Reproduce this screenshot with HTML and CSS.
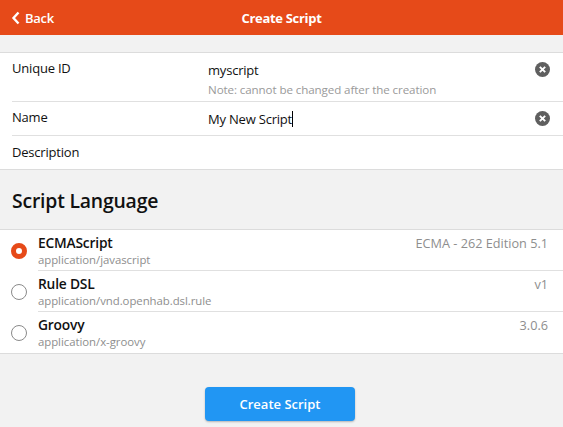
FILE: index.html
```html
<!DOCTYPE html>
<html>
<head>
<meta charset="utf-8">
<link rel="stylesheet" href="styles.css">
</head>
<body>
<div class="navbar">
  <a class="back">
    <svg width="10" height="14" viewBox="0 0 10 14"><path d="M7.5 1.5 L2.5 7 L7.5 12.5" fill="none" stroke="#fff" stroke-width="2.4"/></svg>
    <span>Back</span>
  </a>
  <div class="title">Create Script</div>
</div>
<div class="page">
  <div class="list form">
    <div class="row row-id">
      <div class="label">Unique ID</div>
      <div class="input">
        <div class="value">myscript</div>
        <div class="note">Note: cannot be changed after the creation</div>
      </div>
      <span class="clear"><svg width="15" height="15" viewBox="0 0 14 14"><circle cx="7" cy="7" r="7" fill="#5f5f5f"/><path d="M4.5 4.5 L9.5 9.5 M9.5 4.5 L4.5 9.5" stroke="#fff" stroke-width="1.8"/></svg></span>
    </div>
    <div class="row row-name">
      <div class="label">Name</div>
      <div class="input"><div class="value">My New Script<span class="caret"></span></div></div>
      <span class="clear"><svg width="15" height="15" viewBox="0 0 14 14"><circle cx="7" cy="7" r="7" fill="#5f5f5f"/><path d="M4.5 4.5 L9.5 9.5 M9.5 4.5 L4.5 9.5" stroke="#fff" stroke-width="1.8"/></svg></span>
    </div>
    <div class="row row-desc last">
      <div class="label">Description</div>
    </div>
  </div>
  <h2 class="section">Script Language</h2>
  <div class="list langs">
    <div class="lang">
      <span class="radio checked"></span>
      <div class="lang-body">
        <div class="lang-top"><span class="lang-name">ECMAScript</span><span class="lang-ver">ECMA - 262 Edition 5.1</span></div>
        <div class="lang-mime">application/javascript</div>
      </div>
    </div>
    <div class="lang">
      <span class="radio"></span>
      <div class="lang-body">
        <div class="lang-top"><span class="lang-name">Rule DSL</span><span class="lang-ver">v1</span></div>
        <div class="lang-mime">application/vnd.openhab.dsl.rule</div>
      </div>
    </div>
    <div class="lang last">
      <span class="radio"></span>
      <div class="lang-body">
        <div class="lang-top"><span class="lang-name">Groovy</span><span class="lang-ver">3.0.6</span></div>
        <div class="lang-mime">application/x-groovy</div>
      </div>
    </div>
  </div>
  <div class="actions">
    <button class="btn">Create Script</button>
  </div>
</div>
</body>
</html>
```
FILE: styles.css
```css
* { box-sizing: border-box; }
html, body { margin: 0; padding: 0; }
body {
  font-family: "Open Sans", "Noto Sans", sans-serif;
  background: #f2f2f2;
  color: #111;
  width: 563px;
  height: 427px;
  overflow: hidden;
}
.navbar {
  height: 35px;
  background: #e64a19;
  color: #fff;
  display: flex;
  align-items: center;
  position: relative;
}
.back {
  display: flex;
  align-items: center;
  gap: 4px;
  padding-left: 11px;
  font-size: 13px;
  font-weight: 600;
  letter-spacing: -0.3px;
}
.title {
  position: absolute;
  left: 0; right: 0;
  text-align: center;
  font-size: 13px;
  font-weight: 700;
  letter-spacing: -0.3px;
  pointer-events: none;
}
.page { padding-top: 17px; }
.list {
  background: #fff;
  border-top: 1px solid #dcdcdc;
  border-bottom: 1px solid #dcdcdc;
}
.row {
  display: flex;
  align-items: flex-start;
  margin-left: 12px;
  padding-right: 14px;
  border-bottom: 1px solid #e0e0e0;
  font-size: 13px;
  letter-spacing: -0.2px;
}
.row.last { border-bottom: none; }
.row-id { height: 49px; padding-top: 6px; }
.row-name { height: 34px; padding-top: 6px; }
.row-desc { height: 33px; padding-top: 7px; }
.label { width: 196px; flex: none; }
.input { flex: 1; padding-top: 2px; }
.value { line-height: 18px; }
.caret {
  display: inline-block;
  width: 1px;
  height: 16px;
  background: #000;
  vertical-align: -3px;
}
.note {
  font-size: 11.6px;
  color: #9a9a9a;
  line-height: 15px;
  margin-top: 3px;
  letter-spacing: -0.1px;
}
.clear { padding-top: 3px; display: flex; margin-right: -1px; }
.section {
  margin: 0;
  font-size: 19.4px;
  font-weight: 600;
  letter-spacing: -0.2px;
  padding: 16px 12px 0;
  height: 59px;
  line-height: 30px;
}
.lang {
  display: flex;
  align-items: center;
  height: 41px;
}
.radio {
  flex: none;
  width: 16px;
  height: 16px;
  margin: 0 11px 0 11px;
  border-radius: 50%;
  border: 1.5px solid #8a8a8a;
}
.radio.checked {
  border: 5px solid #e64a19;
  background: #fff;
}
.lang-body {
  flex: 1;
  align-self: stretch;
  border-bottom: 1px solid #e0e0e0;
  padding: 4px 15px 0 0;
}
.lang.last .lang-body { border-bottom: none; }
.lang-top {
  display: flex;
  justify-content: space-between;
  align-items: baseline;
  line-height: 18px;
}
.lang-name { font-size: 13.8px; font-weight: 600; letter-spacing: -0.2px; }
.lang-ver { font-size: 12.7px; color: #8e8e8e; }
.lang-mime { font-size: 11.4px; color: #8e8e8e; line-height: 15px; letter-spacing: -0.05px; }
.actions {
  display: flex;
  justify-content: center;
  padding-top: 33px;
}
.btn {
  width: 150px;
  height: 34px;
  border: none;
  border-radius: 4px;
  background: #2196f3;
  color: #fff;
  font-family: inherit;
  font-size: 13px;
  font-weight: 600;
  box-shadow: 0 1px 2px rgba(0,0,0,0.25);
  margin-left: -3px;
}
```
